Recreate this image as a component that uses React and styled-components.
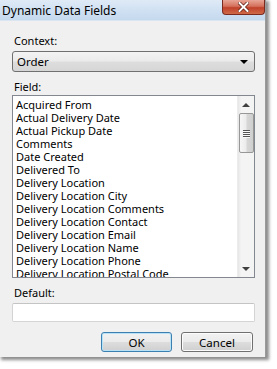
import React from "react";
import styled, { createGlobalStyle } from "styled-components";

const Global = createGlobalStyle`
  html, body { margin: 0; padding: 0; background: #ffffff; overflow: hidden; }
  body { font-family: "Noto Sans", "Open Sans", sans-serif; }
`;

const Page = styled.div`
  width: 277px;
  height: 369px;
  background: #fff;
`;

const Window = styled.div`
  width: 266px;
  height: 357px;
  background: #f0f0f0;
  border-right: 1px solid #9a9a9a;
  box-sizing: border-box;
  box-shadow: 2px 2px 3px 1px rgba(0, 0, 0, 0.45);
  display: flex;
  flex-direction: column;
`;

const TitleBar = styled.div`
  height: 21px;
  flex: none;
  display: flex;
  align-items: flex-start;
  background: linear-gradient(to bottom, #dfeaf6 0%, #cfe0f2 55%, #c4d9ee 100%);
  border-bottom: 1px solid #dbe6f2;
  box-sizing: border-box;
`;

const Title = styled.div`
  font-size: 12px;
  line-height: 15px;
  padding: 3px 0 0 2px;
  color: #000;
`;

const CloseButton = styled.div`
  margin-left: auto;
  width: 43px;
  height: 15px;
  border-radius: 0 0 4px 4px;
  border: 1px solid #7a2a1f;
  border-top: none;
  box-sizing: border-box;
  background: linear-gradient(to bottom, #e8a596 0%, #d5705c 45%, #c0412a 55%, #cf6a48 100%);
  display: flex;
  align-items: center;
  justify-content: center;
`;

const Body = styled.div`
  flex: 1;
  display: flex;
  flex-direction: column;
  padding: 13px 10px 0 12px;
`;

const Label = styled.div`
  font-size: 11px;
  line-height: 14px;
  color: #000;
  padding-left: 2px;
  margin-bottom: ${(p) => p.$mb || 2}px;
  margin-top: ${(p) => p.$mt || 0}px;
`;

const Select = styled.div`
  height: 21px;
  box-sizing: border-box;
  border: 1px solid #707070;
  border-radius: 3px;
  background: linear-gradient(to bottom, #f3f3f3 0%, #ebebeb 48%, #dddddd 52%, #d6d6d6 100%);
  display: flex;
  align-items: center;
  padding: 0 6px 0 4px;
  font-size: 11.5px;
  color: #000;
`;

const Arrow = styled.div`
  margin-left: auto;
  width: 0;
  height: 0;
  border-left: 4px solid transparent;
  border-right: 4px solid transparent;
  border-top: 4px solid #000;
`;

const ListBox = styled.div`
  height: 183px;
  box-sizing: border-box;
  border: 1px solid #828790;
  background: #fff;
  display: flex;
  overflow: hidden;
`;

const Items = styled.div`
  flex: 1;
  padding: 2px 0 0 3px;
  overflow: hidden;
`;

const Item = styled.div`
  font-size: 11px;
  line-height: 13px;
  height: 13px;
  white-space: nowrap;
  color: #000;
`;

const ScrollBar = styled.div`
  width: 17px;
  flex: none;
  background: linear-gradient(to right, #e6e6e6 0%, #f4f4f4 20%, #f4f4f4 100%);
  border-left: 1px solid #ececec;
  box-sizing: border-box;
  display: flex;
  flex-direction: column;
  align-items: center;
`;

const ArrowBox = styled.div`
  height: 17px;
  width: 100%;
  display: flex;
  align-items: center;
  justify-content: center;
  flex: none;
`;

const UpTri = styled.div`
  width: 0;
  height: 0;
  border-left: 4px solid transparent;
  border-right: 4px solid transparent;
  border-bottom: 4px solid #404040;
`;

const DownTri = styled.div`
  width: 0;
  height: 0;
  border-left: 4px solid transparent;
  border-right: 4px solid transparent;
  border-top: 4px solid #404040;
`;

const Thumb = styled.div`
  width: 15px;
  height: 40px;
  box-sizing: border-box;
  border: 1px solid #979797;
  border-radius: 2px;
  background: linear-gradient(to right, #f6f6f6 0%, #ececec 45%, #d6d6d6 55%, #cfcfcf 100%);
  display: flex;
  flex-direction: column;
  align-items: center;
  justify-content: center;
  gap: 1px;
`;

const Grip = styled.div`
  width: 7px;
  height: 1px;
  background: #555;
  box-shadow: 0 1px 0 #fafafa;
`;

const Spacer = styled.div`
  flex: 1;
`;

const Input = styled.div`
  height: 19px;
  box-sizing: border-box;
  border: 1px solid #d4d4d4;
  border-top-color: #c4c4c4;
  border-radius: 2px;
  background: #fff;
`;

const ButtonRow = styled.div`
  display: flex;
  justify-content: flex-end;
  gap: 9px;
  margin-top: 10px;
  padding-right: 2px;
`;

const Button = styled.div`
  width: ${(p) => p.$w}px;
  height: 20px;
  box-sizing: border-box;
  border: 1px solid ${(p) => (p.$default ? "#3c7fb1" : "#707070")};
  border-radius: 3px;
  background: linear-gradient(to bottom, #f2f2f2 0%, #ebebeb 48%, #dddddd 52%, #cfcfcf 100%);
  box-shadow: ${(p) => (p.$default ? "inset 0 0 0 1px #b8e3f7" : "inset 0 0 0 1px #fcfcfc")};
  display: flex;
  align-items: center;
  justify-content: center;
  font-size: 11.5px;
  color: #000;
`;

const fields = [
  "Acquired From",
  "Actual Delivery Date",
  "Actual Pickup Date",
  "Comments",
  "Date Created",
  "Delivered To",
  "Delivery Location",
  "Delivery Location City",
  "Delivery Location Comments",
  "Delivery Location Contact",
  "Delivery Location Email",
  "Delivery Location Name",
  "Delivery Location Phone",
  "Delivery Location Postal Code",
];

export default function App() {
  return (
    <Page>
      <Global />
      <Window>
        <TitleBar>
          <Title>Dynamic Data Fields</Title>
          <CloseButton>
            <svg width="11" height="10" viewBox="0 0 11 10">
              <path d="M1.5 1 L9.5 9 M9.5 1 L1.5 9" stroke="#5a1a10" strokeWidth="3.4" strokeLinecap="square" />
              <path d="M1.5 1 L9.5 9 M9.5 1 L1.5 9" stroke="#ffffff" strokeWidth="2" strokeLinecap="square" />
            </svg>
          </CloseButton>
        </TitleBar>
        <Body>
          <Label $mb={3}>Context:</Label>
          <Select>
            Order
            <Arrow />
          </Select>
          <Label $mt={8} $mb={1}>Field:</Label>
          <ListBox>
            <Items>
              {fields.map((f) => (
                <Item key={f}>{f}</Item>
              ))}
            </Items>
            <ScrollBar>
              <ArrowBox>
                <UpTri />
              </ArrowBox>
              <Thumb>
                <Grip />
                <Grip />
                <Grip />
                <Grip />
              </Thumb>
              <Spacer />
              <ArrowBox>
                <DownTri />
              </ArrowBox>
            </ScrollBar>
          </ListBox>
          <Label $mt={8} $mb={3}>Default:</Label>
          <Input />
          <ButtonRow>
            <Button $w={71} $default>OK</Button>
            <Button $w={72}>Cancel</Button>
          </ButtonRow>
        </Body>
      </Window>
    </Page>
  );
}
